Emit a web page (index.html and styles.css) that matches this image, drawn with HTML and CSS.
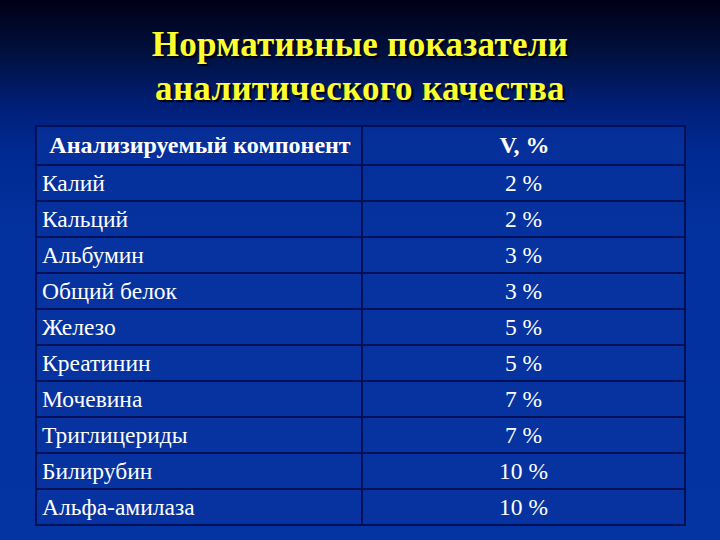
FILE: index.html
```html
<!DOCTYPE html>
<html lang="ru">
<head>
<meta charset="utf-8">
<link rel="stylesheet" href="styles.css">
</head>
<body>
<div class="slide">
  <h1 class="title">Нормативные показатели<br>аналитического качества</h1>
  <table class="norms">
    <colgroup><col class="c1"><col class="c2"></colgroup>
    <thead>
      <tr><th>Анализируемый компонент</th><th>V, %</th></tr>
    </thead>
    <tbody>
      <tr><td>Калий</td><td class="v">2 %</td></tr>
      <tr><td>Кальций</td><td class="v">2 %</td></tr>
      <tr><td>Альбумин</td><td class="v">3 %</td></tr>
      <tr><td>Общий белок</td><td class="v">3 %</td></tr>
      <tr><td>Железо</td><td class="v">5 %</td></tr>
      <tr><td>Креатинин</td><td class="v">5 %</td></tr>
      <tr><td>Мочевина</td><td class="v">7 %</td></tr>
      <tr><td>Триглицериды</td><td class="v">7 %</td></tr>
      <tr><td>Билирубин</td><td class="v">10 %</td></tr>
      <tr><td>Альфа-амилаза</td><td class="v">10 %</td></tr>
    </tbody>
  </table>
</div>
</body>
</html>
```
FILE: styles.css
```css
html, body {
  margin: 0;
  padding: 0;
}
body {
  width: 720px;
  height: 540px;
  overflow: hidden;
  background: linear-gradient(to bottom, #000016 0%, #00113f 10%, #001f7a 20%, #002a92 28%, #0332a0 45%, #0334a2 100%);
  font-family: "Liberation Serif", "Times New Roman", serif;
}
.slide {
  width: 720px;
  height: 540px;
  display: flex;
  flex-direction: column;
  align-items: flex-start;
}
.title {
  align-self: stretch;
  margin: 23px 0 0 0;
  height: 102px;
  text-align: center;
  font-family: "Liberation Serif", "Times New Roman", serif;
  font-size: 35px;
  line-height: 44px;
  font-weight: bold;
  letter-spacing: 0.3px;
  color: #ffff30;
  text-shadow: 2px 2px 1px #000008;
}
.norms {
  margin-left: 35px;
  width: 649px;
  border-collapse: collapse;
  color: #ffffff;
  table-layout: fixed;
  background: rgba(8, 52, 160, 0.6);
}
.norms col.c1 { width: 326px; }
.norms col.c2 { width: 323px; }
.norms th, .norms td {
  border: 2px solid #001058;
  padding: 0 0 0 5px;
  height: 34px;
  font-weight: normal;
  font-size: 23.5px;
  text-align: left;
  vertical-align: middle;
  white-space: nowrap;
  overflow: hidden;
}
.norms th {
  height: 37px;
  font-weight: bold;
  font-size: 24px;
  text-align: center;
  padding: 0 0 0 2px;
}
.norms td.v {
  text-align: center;
  padding: 0;
}
```
